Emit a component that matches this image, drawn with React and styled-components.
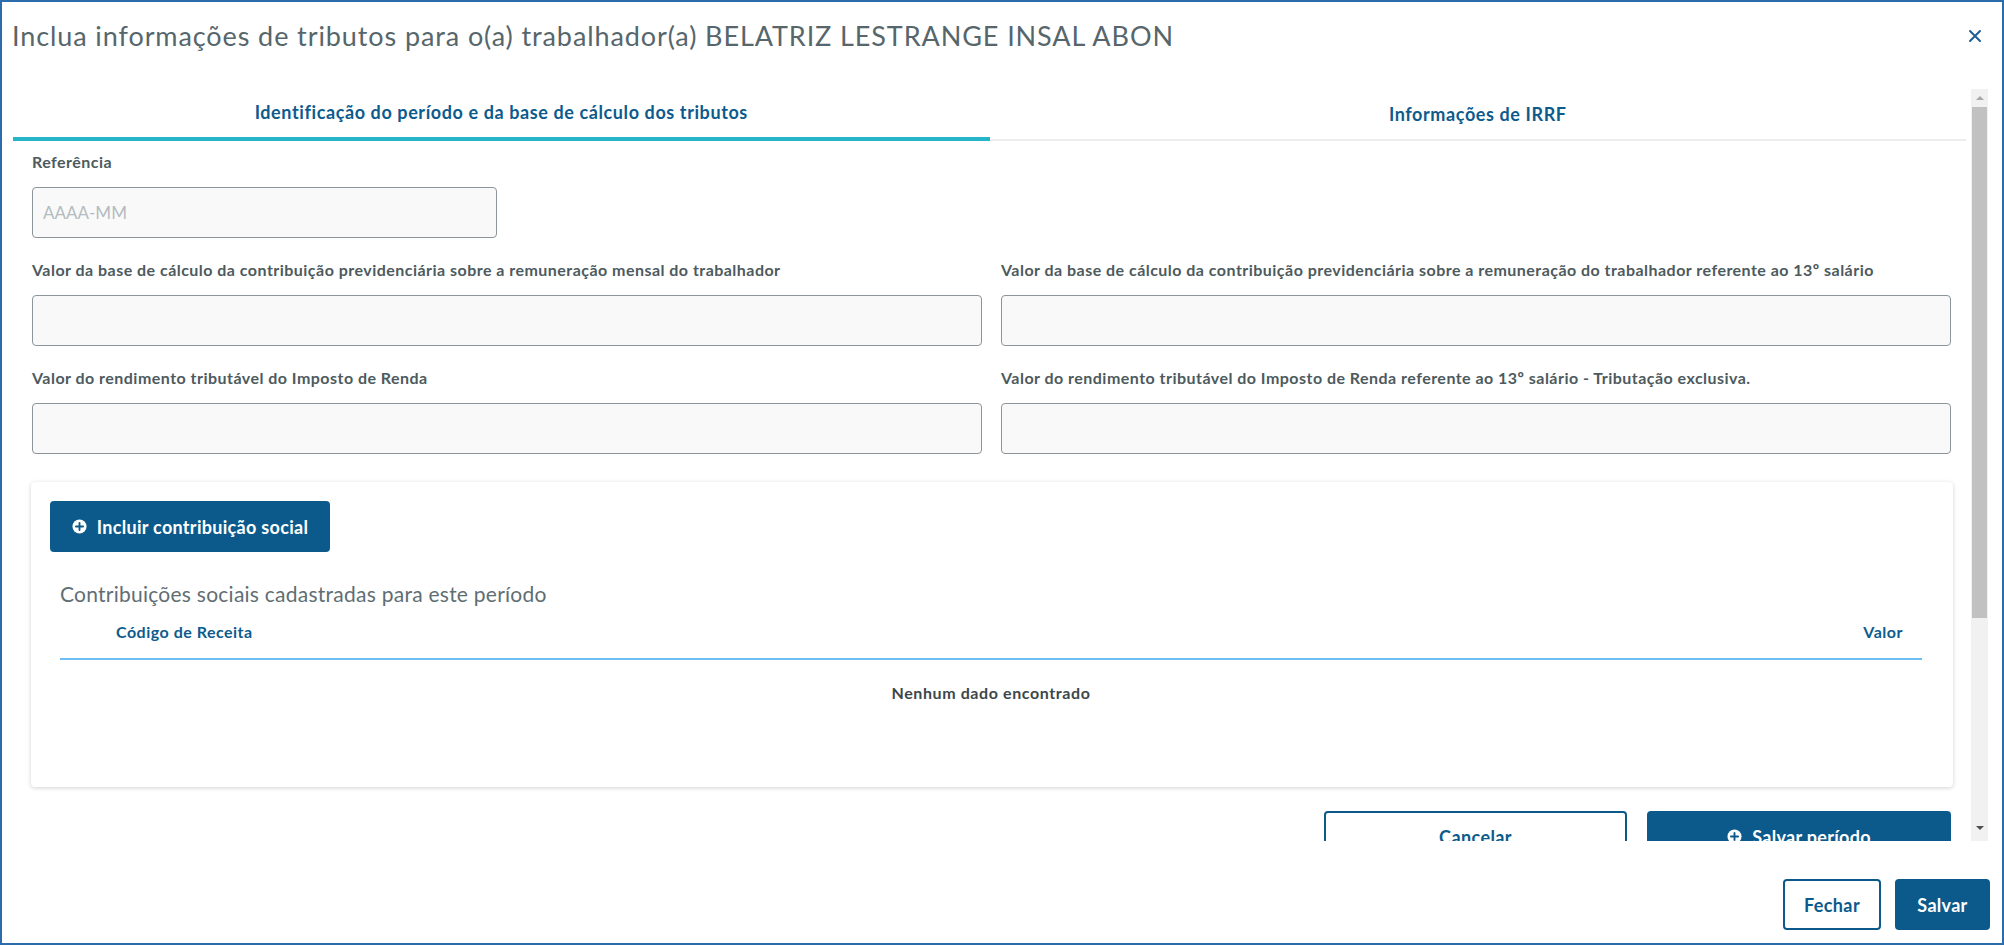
import React from "react";
import styled, { createGlobalStyle } from "styled-components";

const GlobalStyle = createGlobalStyle`
  html, body {
    margin: 0;
    padding: 0;
    background: #ffffff;
  }
  body {
    font-family: Lato, "Noto Sans", sans-serif;
  }
  * {
    box-sizing: border-box;
  }
`;

const PRIMARY = "#0b5a8b";

function PlusCircle({ color = "#ffffff", fg = PRIMARY, size = 15 }) {
  return (
    <svg width={size} height={size} viewBox="0 0 16 16">
      <circle cx="8" cy="8" r="7.5" fill={color} />
      <path d="M8 4.2v7.6M4.2 8h7.6" stroke={fg} strokeWidth="2" strokeLinecap="round" />
    </svg>
  );
}

function CloseIcon() {
  return (
    <svg width="14" height="14" viewBox="0 0 14 14">
      <path d="M2 2l10 10M12 2L2 12" stroke="#1d5f96" strokeWidth="2" strokeLinecap="round" />
    </svg>
  );
}

function App() {
  return (
    <>
      <GlobalStyle />
      <Modal>
        <Header>
          <Title>
            Inclua informações de tributos para o(a) trabalhador(a) BELATRIZ LESTRANGE INSAL ABON
          </Title>
          <CloseButton>
            <CloseIcon />
          </CloseButton>
        </Header>

        <Body>
          <ScrollArea>
            <TabBar>
              <Tab $active>Identificação do período e da base de cálculo dos tributos</Tab>
              <Tab>Informações de IRRF</Tab>
            </TabBar>

            <Form>
              <Field>
                <Label>Referência</Label>
                <Input $width="465px" placeholder="AAAA-MM" />
              </Field>

              <FieldGrid>
                <Field>
                  <Label>
                    Valor da base de cálculo da contribuição previdenciária sobre a remuneração mensal do trabalhador
                  </Label>
                  <Input />
                </Field>
                <Field>
                  <Label>
                    Valor da base de cálculo da contribuição previdenciária sobre a remuneração do trabalhador referente ao 13º salário
                  </Label>
                  <Input />
                </Field>
                <Field>
                  <Label>Valor do rendimento tributável do Imposto de Renda</Label>
                  <Input />
                </Field>
                <Field>
                  <Label>
                    Valor do rendimento tributável do Imposto de Renda referente ao 13º salário - Tributação exclusiva.
                  </Label>
                  <Input />
                </Field>
              </FieldGrid>

              <Card>
                <PrimaryButton $width="280px">
                  <PlusCircle />
                  Incluir contribuição social
                </PrimaryButton>

                <TableSection>
                  <SectionTitle>Contribuições sociais cadastradas para este período</SectionTitle>
                  <TableHead>
                    <HeadCell>Código de Receita</HeadCell>
                    <HeadCell $right>Valor</HeadCell>
                  </TableHead>
                  <EmptyRow>Nenhum dado encontrado</EmptyRow>
                </TableSection>
              </Card>

              <ActionRow>
                <OutlineButton $width="303px">Cancelar</OutlineButton>
                <PrimaryButton $width="304px">
                  <PlusCircle />
                  Salvar período
                </PrimaryButton>
              </ActionRow>
            </Form>
          </ScrollArea>

          <Scrollbar>
            <ArrowUp />
            <Thumb />
            <Track />
            <ArrowDown />
          </Scrollbar>
        </Body>

        <Footer>
          <OutlineButton $width="98px">Fechar</OutlineButton>
          <PrimaryButton $width="95px">Salvar</PrimaryButton>
        </Footer>
      </Modal>
    </>
  );
}

export default App;

const Modal = styled.div`
  width: 2004px;
  height: 945px;
  border: 2px solid #2d6cab;
  display: flex;
  flex-direction: column;
  background: #fff;
  overflow: hidden;
`;

const Header = styled.div`
  height: 87px;
  flex-shrink: 0;
  display: flex;
  align-items: flex-start;
  justify-content: space-between;
  padding: 17px 20px 0 10px;
`;

const Title = styled.h1`
  margin: 0;
  font-size: 27px;
  font-weight: 400;
  line-height: 34px;
  color: #56666b;
  letter-spacing: 0.9px;
`;

const CloseButton = styled.button`
  border: none;
  background: none;
  padding: 0;
  margin-top: 10px;
  width: 14px;
  height: 14px;
  cursor: pointer;
  display: flex;
`;

const Body = styled.div`
  height: 752px;
  flex-shrink: 0;
  display: flex;
  padding: 0 14px 0 11px;
`;

const ScrollArea = styled.div`
  flex: 1;
  overflow: hidden;
  min-width: 0;
`;

const TabBar = styled.div`
  display: flex;
`;

const Tab = styled.div`
  flex: 1;
  height: 52px;
  display: flex;
  align-items: center;
  justify-content: center;
  padding-bottom: ${(p) => (p.$active ? "2px" : "0")};
  font-size: 18px;
  font-weight: 700;
  letter-spacing: 0.6px;
  color: #0d5b8d;
  border-bottom: ${(p) => (p.$active ? "4px solid #25b4c8" : "2px solid #ededed")};
`;

const Form = styled.div`
  padding: 10px 15px 0 19px;
  display: flex;
  flex-direction: column;
`;

const Field = styled.div`
  display: flex;
  flex-direction: column;
  gap: 14px;
`;

const FieldGrid = styled.div`
  display: grid;
  grid-template-columns: 1fr 1fr;
  column-gap: 19px;
  row-gap: 21px;
  margin-top: 21px;
`;

const Label = styled.label`
  font-size: 16px;
  font-weight: 700;
  line-height: 22px;
  letter-spacing: 0.47px;
  color: #4d5a5e;
  white-space: nowrap;
`;

const Input = styled.input`
  width: ${(p) => p.$width || "100%"};
  height: 51px;
  border: 1px solid #8b969a;
  border-radius: 4px;
  background: #f9f9f9;
  padding: 0 10px;
  font-family: inherit;
  font-size: 17px;
  color: #333;
  outline: none;

  &::placeholder {
    color: #b3bcbf;
  }
`;

const Card = styled.div`
  margin-top: 28px;
  margin-left: -1px;
  margin-right: -2px;
  height: 305px;
  background: #fff;
  border-radius: 4px;
  box-shadow: 0 1px 4px rgba(0, 0, 0, 0.18);
  padding: 19px 19px 0 19px;
  display: flex;
  flex-direction: column;
  align-items: flex-start;
`;

const PrimaryButton = styled.button`
  width: ${(p) => p.$width};
  height: 51px;
  flex-shrink: 0;
  border: none;
  border-radius: 4px;
  background: ${PRIMARY};
  color: #fff;
  font-family: inherit;
  font-size: 18px;
  font-weight: 700;
  letter-spacing: 0.3px;
  display: flex;
  align-items: center;
  justify-content: center;
  gap: 10px;
  cursor: pointer;
`;

const OutlineButton = styled.button`
  width: ${(p) => p.$width};
  height: 51px;
  flex-shrink: 0;
  border: 2px solid ${PRIMARY};
  border-radius: 4px;
  background: #fff;
  color: ${PRIMARY};
  font-family: inherit;
  font-size: 18px;
  font-weight: 700;
  letter-spacing: 0.4px;
  cursor: pointer;
`;

const TableSection = styled.div`
  align-self: stretch;
  margin: 28px 12px 0 10px;
`;

const SectionTitle = styled.div`
  font-size: 21px;
  line-height: 28px;
  letter-spacing: 0.25px;
  color: #5f6e73;
`;

const TableHead = styled.div`
  display: flex;
  justify-content: space-between;
  align-items: center;
  height: 52px;
  padding: 0 19px 4px 56px;
  border-bottom: 2px solid #6cbff5;
`;

const HeadCell = styled.div`
  font-size: 16px;
  font-weight: 700;
  letter-spacing: 0.5px;
  color: #0d5b8d;
  text-align: ${(p) => (p.$right ? "right" : "left")};
`;

const EmptyRow = styled.div`
  text-align: center;
  font-size: 16px;
  font-weight: 700;
  letter-spacing: 0.6px;
  color: #3d474a;
  padding-top: 23px;
`;

const ActionRow = styled.div`
  display: flex;
  justify-content: flex-end;
  gap: 20px;
  margin-top: 24px;
`;

const Scrollbar = styled.div`
  width: 17px;
  margin-left: 5px;
  background: #f1f1f1;
  display: flex;
  flex-direction: column;
  align-items: center;
`;

const ArrowUp = styled.div`
  height: 18px;
  width: 100%;
  display: flex;
  align-items: center;
  justify-content: center;
  &::before {
    content: "";
    border-left: 4px solid transparent;
    border-right: 4px solid transparent;
    border-bottom: 4px solid #a8a8a8;
  }
`;

const ArrowDown = styled.div`
  height: 18px;
  width: 100%;
  display: flex;
  align-items: center;
  justify-content: center;
  margin-bottom: 4px;
  &::before {
    content: "";
    border-left: 4px solid transparent;
    border-right: 4px solid transparent;
    border-top: 4px solid #505050;
  }
`;

const Thumb = styled.div`
  width: 15px;
  height: 511px;
  background: #c1c1c1;
`;

const Track = styled.div`
  flex: 1;
`;

const Footer = styled.div`
  flex: 1;
  display: flex;
  justify-content: flex-end;
  align-items: flex-start;
  gap: 14px;
  padding: 38px 12px 0 0;
`;
